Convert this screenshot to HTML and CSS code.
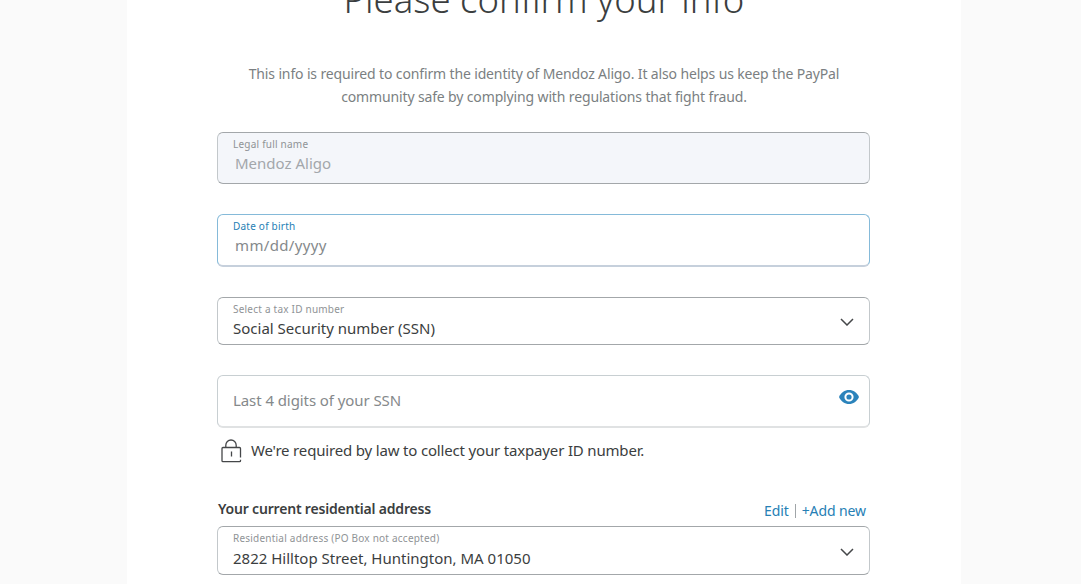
FILE: index.html
```html
<!DOCTYPE html>
<html lang="en">
<head>
    <meta charset="UTF-8">
    <meta name="viewport" content="width=device-width, initial-scale=1.0">
    <title>Please confirm your info</title>
    <link rel="stylesheet" href="styles.css">
</head>
<body>
    <main class="page">
        <h1>Please confirm your info</h1>
        <p class="intro">This info is required to confirm the identity of Mendoz Aligo. It also helps us keep the PayPal<br>community safe by complying with regulations that fight fraud.</p>
        <div class="form">
            <div class="field disabled">
                <label>Legal full name</label>
                <div class="value">Mendoz Aligo</div>
            </div>
            <div class="field active">
                <label>Date of birth</label>
                <div class="value">mm/dd/yyyy</div>
            </div>
            <div class="field select">
                <label>Select a tax ID number</label>
                <div class="value">Social Security number (SSN)</div>
                <svg class="chevron" viewBox="0 0 14 8"><path d="M1 1l6 6 6-6"/></svg>
            </div>
            <div class="field ssn">
                <div class="value">Last 4 digits of your SSN</div>
                <svg class="eye" viewBox="0 0 20 14">
                    <path d="M0 7C2.200 2.200 5.700 0 10 0s7.800 2.200 10 7c-2.200 4.800-5.700 7-10 7S2.200 11.800 0 7z" fill="#2b83bb"/>
                    <circle cx="10" cy="7" r="3.600" fill="none" stroke="#fff" stroke-width="2"/>
                </svg>
            </div>
            <div class="law">
                <svg class="lock" viewBox="0 0 22 24">
                    <path d="M20.500 18.500V9.500a1 1 0 0 0-1-1H3a1 1 0 0 0-1 1v12.200a1 1 0 0 0 1 1h16.500a1 1 0 0 0 1-1v-1M5.800 8.500V6.200a5.200 5.200 0 0 1 10.400 0v2.300M11.500 12.500v5"/>
                </svg>
                <span>We're required by law to collect your taxpayer ID number.</span>
            </div>
            <div class="address-head">
                <h2>Your current residential address</h2>
                <div class="links"><a>Edit</a><i></i><a>+Add new</a></div>
            </div>
            <div class="field select address">
                <label>Residential address (PO Box not accepted)</label>
                <div class="value">2822 Hilltop Street, Huntington, MA 01050</div>
                <svg class="chevron" viewBox="0 0 14 8"><path d="M1 1l6 6 6-6"/></svg>
            </div>
        </div>
    </main>
</body>
</html>
```
FILE: styles.css
```css
* {
    box-sizing: border-box;
}
body {
    margin: 0;
    height: 584px;
    overflow: hidden;
    background-color: #fafafa;
    color: #3b3e40;
    font-family: "Noto Sans", "Open Sans", sans-serif;
    font-size: 15px;
}
.page {
    width: 834px;
    height: 584px;
    margin-left: 127px;
    overflow: hidden;
    background-color: #fff;
}
h1 {
    margin: -25px 0 0;
    height: 48px;
    line-height: 48px;
    text-align: center;
    font-size: 36.5px;
    font-weight: 300;
    white-space: nowrap;
}
.intro {
    margin: 40px 0 0;
    text-align: center;
    font-size: 14px;
    letter-spacing: -0.14px;
    line-height: 22.5px;
    color: #7b7f82;
    white-space: nowrap;
}
.form {
    width: 653px;
    margin: 24px 0 0 90px;
}
.field {
    position: relative;
    height: 52px;
    padding: 4px 15px 0;
    margin-bottom: 30px;
    border: 1px solid #a3a7aa;
    border-left-color: #c3c8cb;
    border-right-color: #c3c8cb;
    border-radius: 6px;
    white-space: nowrap;
}
.field label {
    display: block;
    height: 14px;
    line-height: 14px;
    font-size: 10px;
    letter-spacing: 0.22px;
    color: #8f9396;
}
.value {
    line-height: 22px;
    margin-top: 1px;
}
.disabled {
    background-color: #f4f6fa;
}
.disabled .value {
    padding-left: 2px;
    color: #a3a7ab;
}
.active {
    height: 53px;
    border-color: #85bad9;
    border-bottom: 2px solid #c6d0dc;
}
.active label {
    color: #2680b5;
}
.active .value {
    padding-left: 2px;
    letter-spacing: 0.35px;
    color: #85898b;
}
.select {
    height: 48px;
}
.ssn {
    height: 53px;
    margin-bottom: 11px;
    border-color: #c8cfd2;
    border-bottom: 2px solid #e0e2e3;
}
.ssn .value {
    margin-top: 9px;
    letter-spacing: -0.08px;
    color: #85898b;
}
.chevron {
    position: absolute;
    right: 15px;
    top: 20px;
    width: 14px;
    height: 8px;
    fill: none;
    stroke: #454749;
    stroke-width: 1.5;
}
.eye {
    position: absolute;
    right: 10px;
    top: 14px;
    width: 20px;
    height: 14px;
}
.law {
    display: flex;
    gap: 9px;
    height: 24px;
    margin-left: 3px;
    line-height: 22px;
    letter-spacing: -0.17px;
}
.lock {
    width: 22px;
    height: 24px;
    fill: none;
    stroke: #454749;
    stroke-width: 1.3;
}
.address-head {
    display: flex;
    justify-content: space-between;
    height: 24px;
    margin: 36px 0 3px;
    line-height: 22px;
}
h2 {
    margin: -1px 0 0 1px;
    font-size: 14px;
    font-weight: 600;
    letter-spacing: -0.19px;
}
.links {
    display: flex;
    align-items: center;
    padding-right: 4px;
    font-size: 14px;
    letter-spacing: -0.1px;
    color: #2680b5;
}
.links i {
    width: 1px;
    height: 14px;
    margin: 0 6px;
    background-color: #a0a5a8;
}
.address {
    height: 49px;
}
.address .value {
    margin-top: 2px;
}
.address .chevron {
    top: 21px;
}
```
